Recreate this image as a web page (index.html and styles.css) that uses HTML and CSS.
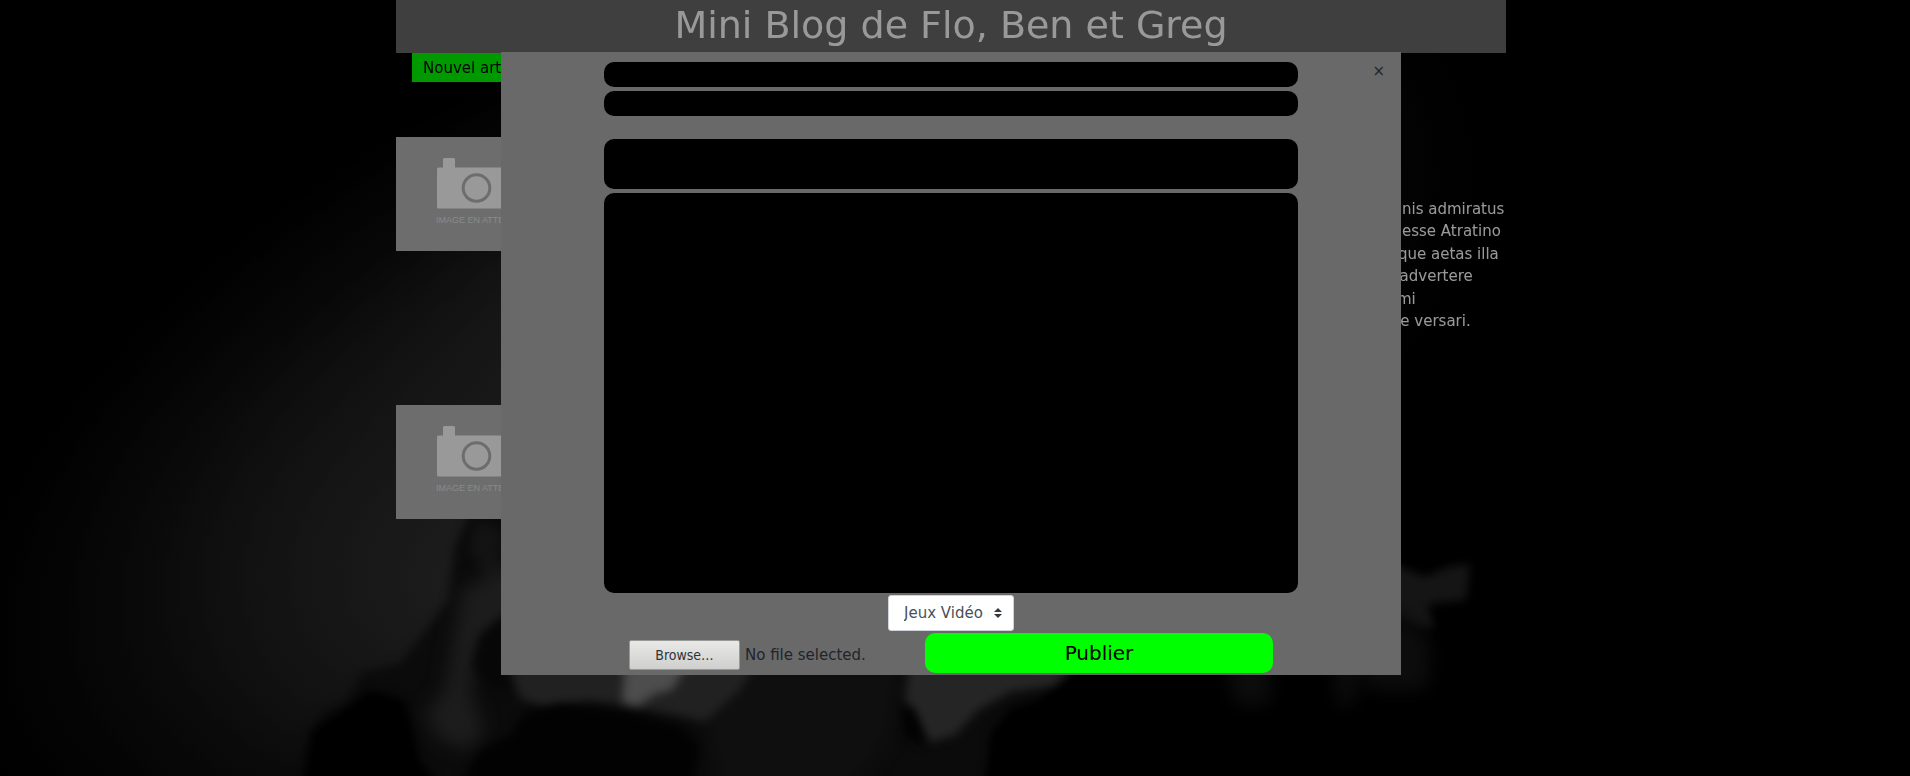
FILE: index.html
```html
<!DOCTYPE html>
<html lang="fr">
<head>
<meta charset="utf-8">
<title>Mini Blog</title>
<link rel="stylesheet" href="styles.css">
</head>
<body>
<svg class="sky" viewBox="0 0 1910 776" preserveAspectRatio="xMidYMid slice" aria-hidden="true">
  <defs>
    <radialGradient id="glow" gradientUnits="userSpaceOnUse" cx="0" cy="0" r="1" gradientTransform="translate(720 410) rotate(-24) scale(820 400)">
      <stop offset="0" stop-color="#4a4a4a"/>
      <stop offset=".3" stop-color="#363636"/>
      <stop offset=".5" stop-color="#262626"/>
      <stop offset=".75" stop-color="#0e0e0e"/>
      <stop offset="1" stop-color="#000"/>
    </radialGradient>
    <radialGradient id="low" gradientUnits="userSpaceOnUse" cx="0" cy="0" r="1" gradientTransform="translate(480 600) scale(420 330)">
      <stop offset="0" stop-color="#333" stop-opacity=".7"/>
      <stop offset=".5" stop-color="#222" stop-opacity=".6"/>
      <stop offset="1" stop-color="#111" stop-opacity="0"/>
    </radialGradient>
    <filter id="b5" x="-30%" y="-30%" width="160%" height="160%" color-interpolation-filters="sRGB"><feGaussianBlur stdDeviation="5"/></filter>
    <filter id="b9" x="-50%" y="-50%" width="200%" height="200%" color-interpolation-filters="sRGB"><feGaussianBlur stdDeviation="9"/></filter>
  </defs>
  <rect width="1910" height="776" fill="#000"/>
  <rect width="1910" height="776" fill="url(#glow)"/>
  <rect width="1910" height="776" fill="url(#low)"/>
  <path d="M1390 460L1440 430L1600 380V800H1040L1080 690Z" fill="#000" filter="url(#b5)"/>
  <path d="M292 800L305 745L322 712L345 702L362 672L400 664L430 625L448 600L455 545L474 505L520 515V670H1080L1050 690L1030 715L1000 730L985 800Z" fill="#131313" filter="url(#b5)"/>
  <path d="M300 800L312 730L345 708L370 690L405 700L420 760L450 800Z" fill="#000" filter="url(#b5)"/>
  <path d="M478 520L500 530V590L482 575L470 545Z" fill="#202020" filter="url(#b5)"/>
  <path d="M462 590L520 560V620L485 640L470 690L484 730L470 750L440 740L425 715L445 690Z" fill="#303030" filter="url(#b9)"/>
  <path d="M480 635L510 610V690L490 690L472 665Z" fill="#0d0d0d" filter="url(#b5)"/>
  <path d="M740 650H900L890 735L850 790H720L705 710Z" fill="#1a1a1a" filter="url(#b9)"/>
  <path d="M505 655H760L740 690L705 722L680 716L640 708L615 704L590 701L545 708L520 698Z" fill="#383838" filter="url(#b5)"/>
  <path d="M910 655H1080L1055 685L1010 692L978 710L955 735L930 742L905 700Z" fill="#3f3f3f" filter="url(#b5)"/>
  <path d="M525 712L560 704L600 708L635 714L680 726L700 745L690 800H450L480 750L510 735Z" fill="#040404" filter="url(#b5)"/>
  <path d="M625 660H690L672 690L655 694L638 706L622 702Z" fill="#808080" filter="url(#b5)"/>
  <path d="M900 705L915 710L925 745L905 738Z" fill="#050505" filter="url(#b5)"/>
  <path d="M985 800L990 735L1010 708L1070 692V800Z" fill="#000" filter="url(#b5)"/>
  <path d="M1385 560L1425 577L1448 567L1470 564L1466 600L1428 604L1434 628L1420 628L1385 612Z" fill="#242424" filter="url(#b5)"/>
  <path d="M1225 660H1270V705H1235ZM1333 660H1362L1352 706H1338ZM1362 670L1400 610L1430 640L1428 690H1370Z" fill="#151515" filter="url(#b9)"/>
</svg>

<div class="page">
  <header class="banner"><h1 class="banner-title">Mini Blog de Flo, Ben et Greg</h1></header>
  <nav class="toolbar"><button type="button" class="new-article">Nouvel article</button></nav>
  <main class="articles">
    <article class="article">
      <svg class="thumb" viewBox="0 0 202 114" preserveAspectRatio="none" role="img" aria-label="Image en attente">
        <rect width="202" height="114" fill="#b6b6b6"/>
        <path d="M41 32q0-1.500 1.500-1.500h4.500v-8q0-1.500 1.500-1.500h9q1.500 0 1.500 1.500v8h101q1.500 0 1.500 1.500v38q0 1.500-1.500 1.500h-117.500q-1.500 0-1.500-1.500z" fill="#fff"/>
        <circle cx="80.500" cy="51" r="13.300" fill="none" stroke="#b6b6b6" stroke-width="3"/>
        <text class="thumb-text" x="40" y="86">IMAGE EN ATTENTE</text>
      </svg>
      <p class="excerpt">Quam quidem partem accusationis admiratus sum et moleste tuli potissimum esse Atratino datam. Neque enim decebat neque aetas illa postulabat neque, id quod animadvertere poteratis, pudor patiebatur optimi adulescentis in tali illum oratione versari.</p>
    </article>
    <article class="article">
      <svg class="thumb" viewBox="0 0 202 114" preserveAspectRatio="none" role="img" aria-label="Image en attente">
        <rect width="202" height="114" fill="#b6b6b6"/>
        <path d="M41 32q0-1.500 1.500-1.500h4.500v-8q0-1.500 1.500-1.500h9q1.500 0 1.500 1.500v8h101q1.500 0 1.500 1.500v38q0 1.500-1.500 1.500h-117.500q-1.500 0-1.500-1.500z" fill="#fff"/>
        <circle cx="80.500" cy="51" r="13.300" fill="none" stroke="#b6b6b6" stroke-width="3"/>
        <text class="thumb-text" x="40" y="86">IMAGE EN ATTENTE</text>
      </svg>
    </article>
  </main>
</div>

<div class="overlay">
  <section class="modal" role="dialog" aria-label="Nouvel article">
    <button type="button" class="close" aria-label="Fermer">×</button>
    <form class="form">
      <input class="field" type="text" aria-label="Auteur">
      <input class="field" type="text" aria-label="Titre">
      <textarea class="field summary" aria-label="Résumé"></textarea>
      <textarea class="field content" aria-label="Contenu"></textarea>
      <div class="picker">
        <select class="category" aria-label="Catégorie"><option>Jeux Vidéo</option></select>
        <svg class="arrows" viewBox="0 0 8 10" aria-hidden="true"><path d="M4 0L8 4H0ZM4 10L0 6H8Z" fill="#343a40"/></svg>
      </div>
      <div class="actions">
        <label class="upload"><input class="upload-input" type="file"><span class="browse">Browse…</span><span>No file selected.</span></label>
        <button type="button" class="publish">Publier</button>
      </div>
    </form>
  </section>
</div>
</body>
</html>
```
FILE: styles.css
```css
* { box-sizing: border-box; }

body {
  margin: 0;
  padding-right: 8px;
  min-height: 100vh;
  overflow: hidden;
  background: #000;
  color: #fff;
  font: 15px/1.5 "DejaVu Sans", sans-serif;
}

button, input, select, textarea { font: inherit; }

.sky {
  position: fixed;
  inset: 0;
  z-index: -1;
  width: 100%;
  height: 100%;
}

.page {
  max-width: 1110px;
  margin: 0 auto;
}

.banner {
  padding: 3px 0 5px;
  background: #696969;
}

.banner-title {
  margin: 0;
  font-size: 38px;
  font-weight: 400;
  line-height: 45px;
  text-align: center;
}

.toolbar { padding-left: 16px; }

.new-article {
  display: block;
  padding: 4px 11px 2px;
  border: 0;
  background: #0f0;
  color: #000;
}

.articles { padding-top: 55px; }

.article {
  display: flex;
  justify-content: space-between;
  align-items: flex-start;
  min-height: 268px;
}

.thumb {
  width: 202px;
  height: 114px;
}

.thumb-text {
  fill: #e4e4e4;
  font: 9px "Liberation Sans", sans-serif;
}

.excerpt {
  width: 346px;
  margin: 61px 0 0;
}

.overlay {
  position: fixed;
  inset: 0;
  padding: 52px 8px 0 0;
  background: rgba(0, 0, 0, .4);
}

.modal {
  position: relative;
  max-width: 900px;
  margin: 0 auto;
  padding: 10px 0 2px;
  background: #696969;
  color: #212529;
}

.close {
  position: absolute;
  top: 8px;
  right: 16px;
  padding: 0;
  border: 0;
  background: none;
  color: #212529;
}

.form {
  display: flex;
  flex-direction: column;
  max-width: 694px;
  margin: 0 auto;
}

.field {
  height: 25px;
  margin: 0 0 4px;
  padding: 0 10px;
  border: 0;
  border-radius: 10px;
  background: #000;
  color: #fff;
  resize: none;
}

.summary {
  height: 50px;
  margin-top: 19px;
}

.content {
  height: 400px;
  margin-bottom: 2px;
}

.picker {
  display: grid;
  align-self: center;
  align-items: center;
  margin-bottom: 2px;
}

.category {
  grid-area: 1 / 1;
  height: 36px;
  padding: 0 30px 0 15px;
  border: 1px solid #ced4da;
  border-radius: 3px;
  background: #fff;
  color: #495057;
  appearance: none;
}

.arrows {
  grid-area: 1 / 1;
  justify-self: end;
  width: 8px;
  height: 10px;
  margin-right: 12px;
  pointer-events: none;
}

.actions {
  display: flex;
  justify-content: space-between;
  align-items: center;
  padding: 0 25px;
}

.upload {
  display: flex;
  align-items: center;
  gap: 5px;
  padding-top: 4px;
}

.upload-input {
  position: absolute;
  width: 1px;
  height: 1px;
  opacity: 0;
}

.browse {
  width: 111px;
  border: 1px solid #999a96;
  border-radius: 2px;
  background: linear-gradient(#e9e9e8, #cfcfce);
  color: #2e3436;
  font-family: "DejaVu Sans Condensed", "DejaVu Sans", sans-serif;
  font-size: 14px;
  line-height: 28px;
  text-align: center;
}

.publish {
  width: 348px;
  height: 40px;
  border: 0;
  border-radius: 10px;
  background: #0f0;
  color: #000;
  font-size: 20px;
}
```
